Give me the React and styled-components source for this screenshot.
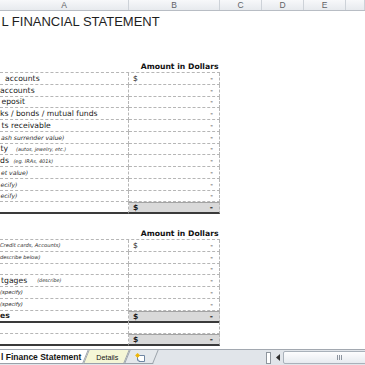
import styled, { createGlobalStyle } from "styled-components";

const ROW_H = 11.75;

const assets = [
  { label: "accounts", shift: 5 },
  { label: "accounts", shift: 0 },
  { label: "eposit", shift: 1.5 },
  { label: "ks / bonds / mutual funds", shift: 0 },
  { label: "ts receivable", shift: 1.5 },
  { note: "ash surrender value)", shift: 1, size: 6.1 },
  { label: "ty", note: "(autos, jewelry, etc.)", shift: 0.5, gap: 8, size: 4.9 },
  { label: "ds", note: "(eg. IRAs, 401k)", shift: 0, gap: 4.5, size: 5 },
  { note: "et value)", shift: 1, size: 6.1 },
  { note: "ecify)", shift: 0.5, size: 6.1 },
  { note: "ecify)", shift: 0.5, size: 6.1 },
];

const liabilities = [
  { note: "Credit cards, Accounts)", shift: 0, size: 5.2 },
  { note: "describe below)", shift: 0, size: 5.1 },
  {},
  { label: "tgages", note: "(describe)", shift: 1, gap: 10, size: 4.8 },
  { note: "(specify)", shift: 0, size: 5.3 },
  { note: "(specify)", shift: 0, size: 5.3 },
];

export default function App() {
  return (
    <>
      <GlobalStyle />
      <Workbook>
        <HeaderBar>
          {["A", "B", "C", "D", "E", ""].map((letter, i) => (
            <ColLetter key={i}>{letter}</ColLetter>
          ))}
        </HeaderBar>

        <Grid>
          <TitleRow>
            <Title>L FINANCIAL STATEMENT</Title>
          </TitleRow>
          <Gap $h={31} />
          <Section rows={assets} totalLabel="" />
          <Gap $h={13} />
          <Section rows={liabilities} totalLabel="es" />
          <Table $open>
            <Row>
              <LabelCell />
              <AmountCell />
            </Row>
            <Row>
              <LabelCell $total />
              <AmountCell $total>
                <span>$</span>
                <span>-</span>
              </AmountCell>
            </Row>
          </Table>
        </Grid>

        <TabBar>
          <SheetTab $active $bg="#ffffff" $left={-8}>
            l Finance Statement
          </SheetTab>
          <SheetTab $bg="#f5f6d6" $padL={10} $padR={9}>
            Details
          </SheetTab>
          <SheetTab $bg="#e4e8ec" $padL={8} $padR={10}>
            <InsertIcon />
          </SheetTab>
          <Spacer />
          <SplitBox />
          <NavButton>
            <svg width="4" height="7" viewBox="0 0 4 7">
              <path d="M4 0 L0 3.5 L4 7 Z" fill="#2f2f2f" />
            </svg>
          </NavButton>
          <Scrollbar>
            <Grip>
              <i />
              <i />
              <i />
            </Grip>
          </Scrollbar>
        </TabBar>
      </Workbook>
    </>
  );
}

function Section({ rows, totalLabel }) {
  return (
    <>
      <HeadingRow>
        <span />
        <AmountHeading>Amount in Dollars</AmountHeading>
      </HeadingRow>
      <Table>
        {rows.map((row, i) => (
          <Row key={i}>
            <LabelCell>
              {row.label && <Label $shift={row.shift}>{row.label}</Label>}
              {row.note && (
                <Note $shift={row.label ? row.gap : row.shift} $size={row.size}>
                  {row.note}
                </Note>
              )}
            </LabelCell>
            <AmountCell>
              <span>{i === 0 ? "$" : ""}</span>
              <span>-</span>
            </AmountCell>
          </Row>
        ))}
        <Row>
          <LabelCell $total>
            <Label $shift={0}>{totalLabel}</Label>
          </LabelCell>
          <AmountCell $total>
            <span>$</span>
            <span>-</span>
          </AmountCell>
        </Row>
      </Table>
    </>
  );
}

function InsertIcon() {
  return (
    <svg width="11" height="9" viewBox="0 0 11 9">
      <path d="M2.5 2.5 H9.5 V8.5 H4 L2.5 7 Z" fill="#fff" stroke="#6f86a3" strokeWidth="1" />
      <path d="M2.5 7 H4 V8.5" fill="none" stroke="#6f86a3" strokeWidth="0.8" />
      <circle cx="2.6" cy="2.4" r="1.9" fill="#f2c318" />
      <path d="M2.6 0 V4.8 M0.2 2.4 H5" stroke="#e7a90c" strokeWidth="0.6" />
    </svg>
  );
}

const GlobalStyle = createGlobalStyle`
  html, body {
    margin: 0;
    padding: 0;
    background: #ffffff;
  }
  body {
    width: 365px;
    height: 365px;
    overflow: hidden;
    font-family: "DejaVu Sans", Verdana, sans-serif;
  }
`;

const Workbook = styled.div`
  width: 365px;
  height: 365px;
  display: flex;
  flex-direction: column;
  background: #ffffff;
`;

const HeaderBar = styled.div`
  display: grid;
  grid-template-columns: 129px 91px 42px 42px 42px 1fr;
  height: 11px;
  box-sizing: border-box;
  background: linear-gradient(#f7f8fa, #e7eaee);
  border-bottom: 1px solid #b8bdc4;
`;

const ColLetter = styled.div`
  display: flex;
  align-items: center;
  justify-content: center;
  border-right: 1px solid #cdd2d8;
  font-family: "Liberation Sans", Arial, sans-serif;
  font-size: 8.5px;
  line-height: 10px;
  color: #5f6266;
`;

const Grid = styled.div`
  flex: 1;
  overflow: hidden;
  display: flex;
  flex-direction: column;
`;

const TitleRow = styled.div`
  height: 18px;
  display: flex;
  align-items: flex-end;
  flex-shrink: 0;
`;

const Title = styled.div`
  margin-left: 1.5px;
  font-family: "Liberation Sans", Arial, sans-serif;
  font-size: 13px;
  line-height: 15px;
  color: #1e1e1e;
  white-space: nowrap;
`;

const Gap = styled.div`
  height: ${(p) => p.$h}px;
  flex-shrink: 0;
`;

const HeadingRow = styled.div`
  display: grid;
  grid-template-columns: 129px 91px;
  height: 12px;
  align-items: center;
  flex-shrink: 0;
`;

const AmountHeading = styled.div`
  text-align: right;
  padding-right: 1.5px;
  font-size: 7.7px;
  font-weight: bold;
  color: #111;
  white-space: nowrap;
`;

const Table = styled.div`
  width: 220px;
  flex-shrink: 0;
  border-top: ${(p) => (p.$open ? "none" : "1px dashed #b6b6b6")};
`;

const Row = styled.div`
  display: grid;
  grid-template-columns: 129px 91px;
  height: ${ROW_H}px;
`;

const LabelCell = styled.div`
  display: flex;
  align-items: center;
  overflow: hidden;
  white-space: nowrap;
  box-sizing: border-box;
  border-right: 1px dashed #b6b6b6;
  border-bottom: ${(p) => (p.$total ? "2px solid #3a3a3a" : "1px dashed #b6b6b6")};
  font-size: 7.7px;
  font-weight: ${(p) => (p.$total ? "bold" : "normal")};
  color: #1b1b1b;
`;

const Label = styled.span`
  margin-left: ${(p) => p.$shift}px;
  flex-shrink: 0;
`;

const Note = styled.i`
  margin-left: ${(p) => p.$shift}px;
  flex-shrink: 0;
  font-size: ${(p) => p.$size}px;
  color: #2a2a2a;
`;

const AmountCell = styled.div`
  display: flex;
  align-items: center;
  justify-content: space-between;
  box-sizing: border-box;
  padding: 0 6px 0 4px;
  border-right: 1px dashed #b6b6b6;
  border-top: ${(p) => (p.$total ? "1px solid #a3a3a3" : "none")};
  border-bottom: ${(p) => (p.$total ? "2px solid #3a3a3a" : "1px dashed #b6b6b6")};
  background: ${(p) => (p.$total ? "#d9d9d9" : "transparent")};
  font-size: 7.7px;
  font-weight: ${(p) => (p.$total ? "bold" : "normal")};
  color: #1b1b1b;
`;

const TabBar = styled.div`
  height: 16px;
  flex-shrink: 0;
  display: flex;
  align-items: stretch;
  box-sizing: border-box;
  background: #e1e5ea;
  border-top: 1px solid #a2a8b0;
  font-family: "Liberation Sans", Arial, sans-serif;
  overflow: hidden;
`;

const SheetTab = styled.div`
  position: relative;
  isolation: isolate;
  display: flex;
  align-items: center;
  padding: 0 ${(p) => p.$padR ?? 5}px 1px ${(p) => p.$padL ?? 1}px;
  font-size: ${(p) => (p.$active ? "8.5px" : "7.2px")};
  font-weight: ${(p) => (p.$active ? "bold" : "normal")};
  color: #141414;
  white-space: nowrap;
  z-index: ${(p) => (p.$active ? 2 : 1)};

  &::before {
    content: "";
    position: absolute;
    top: -1px;
    bottom: 1px;
    left: ${(p) => p.$left ?? 0}px;
    right: 0;
    background: ${(p) => p.$bg};
    border: 1px solid #9ba2aa;
    border-top: none;
    transform: skewX(-22deg);
    z-index: -1;
  }
`;

const Spacer = styled.div`
  flex: 1;
`;

const SplitBox = styled.div`
  align-self: center;
  width: 3px;
  height: 10px;
  margin-right: 1px;
  background: #ffffff;
  border: 1px solid #8f969e;
`;

const NavButton = styled.div`
  width: 11px;
  display: flex;
  align-items: center;
  justify-content: center;
`;

const Scrollbar = styled.div`
  flex: 1;
  margin: 1px -30px 1px 0;
  display: flex;
  align-items: center;
  justify-content: center;
  border: 1px solid #a9b1ba;
  border-radius: 2px;
  background: linear-gradient(#fdfdfe, #e7ebf0);
`;

const Grip = styled.div`
  display: flex;
  gap: 1px;

  i {
    width: 1px;
    height: 5px;
    background: #8d959f;
  }
`;
